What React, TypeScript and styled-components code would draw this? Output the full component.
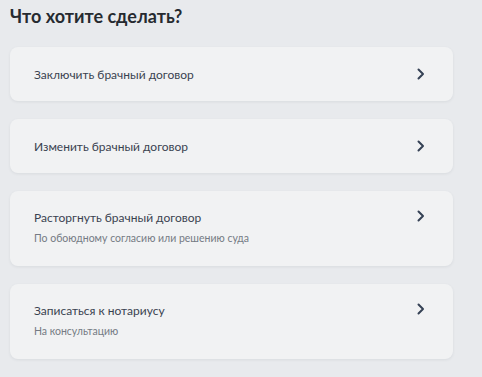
import React from "react";
import styled, { createGlobalStyle } from "styled-components";

const Global = createGlobalStyle`
  html, body { margin: 0; padding: 0; background: #e8eaed; }
  body { font-family: Lato, "Noto Sans", sans-serif; }
`;

const Page = styled.div`
  width: 482px;
  height: 377px;
  box-sizing: border-box;
  padding: 5px 29px 0 10px;
  background: #e8eaed;
  overflow: hidden;
`;

const Title = styled.h1`
  margin: 0 0 19px 0;
  font-size: 18px;
  line-height: 23px;
  font-weight: 700;
  color: #262a30;
`;

const List = styled.div`
  display: flex;
  flex-direction: column;
  gap: 18px;
`;

const Card = styled.div<{ $sub?: boolean }>`
  display: flex;
  align-items: ${(p) => (p.$sub ? "flex-start" : "center")};
  justify-content: space-between;
  box-sizing: border-box;
  min-height: ${(p) => (p.$sub ? "75px" : "54px")};
  padding: ${(p) => (p.$sub ? "19px 28px 0 24px" : "0 28px 0 24px")};
  background: #f1f2f3;
  border-radius: 8px;
  box-shadow: 0 1px 3px rgba(40, 50, 70, 0.08);
`;

const Texts = styled.div`
  display: flex;
  flex-direction: column;
  gap: 7px;
`;

const Label = styled.div`
  font-size: 12px;
  line-height: 15px;
  color: #3a4250;
`;

const Sub = styled.div`
  font-size: 10.5px;
  line-height: 12px;
  color: #757b84;
`;

const Chevron = styled.svg`
  width: 8px;
  height: 12px;
  flex: none;
`;

const items = [
  { title: "Заключить брачный договор" },
  { title: "Изменить брачный договор" },
  { title: "Расторгнуть брачный договор", sub: "По обоюдному согласию или решению суда" },
  { title: "Записаться к нотариусу", sub: "На консультацию" },
];

export default function App() {
  return (
    <Page>
      <Global />
      <Title>Что хотите сделать?</Title>
      <List>
        {items.map((it) => (
          <Card key={it.title} $sub={!!it.sub}>
            <Texts>
              <Label>{it.title}</Label>
              {it.sub && <Sub>{it.sub}</Sub>}
            </Texts>
            <Chevron viewBox="0 0 8 12">
              <path d="M1.5 1.5 L6 6 L1.5 10.5" fill="none" stroke="#364255" strokeWidth="2" strokeLinecap="round" strokeLinejoin="round" />
            </Chevron>
          </Card>
        ))}
      </List>
    </Page>
  );
}
